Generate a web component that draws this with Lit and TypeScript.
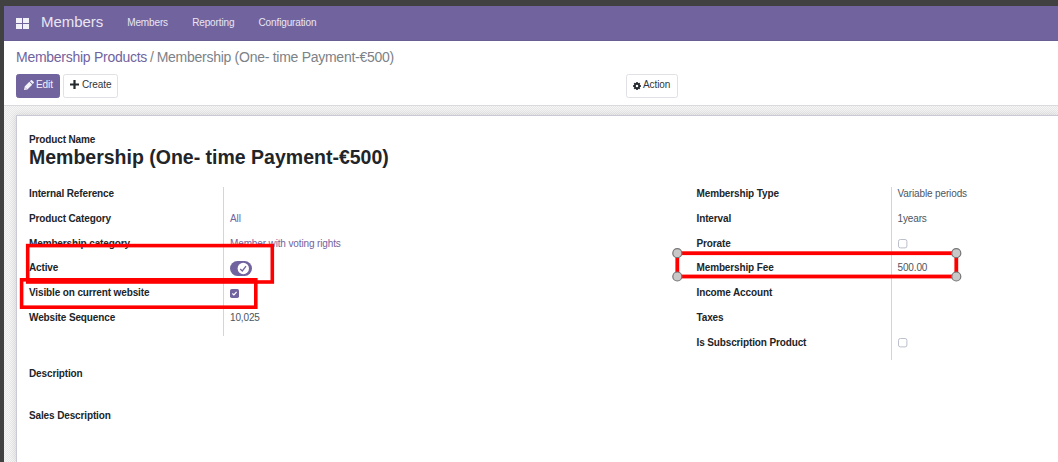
import { LitElement, html, css, svg, nothing } from "lit";
import { customElement, property } from "lit/decorators.js";

type Field = { label: string; kind?: "text" | "link" | "toggle" | "check" | "box"; value?: string };

const LEFT: Field[] = [
  { label: "Internal Reference" },
  { label: "Product Category", kind: "link", value: "All" },
  { label: "Membership category", kind: "link", value: "Member with voting rights" },
  { label: "Active", kind: "toggle" },
  { label: "Visible on current website", kind: "check" },
  { label: "Website Sequence", kind: "text", value: "10,025" },
];

const RIGHT: Field[] = [
  { label: "Membership Type", kind: "text", value: "Variable periods" },
  { label: "Interval", kind: "text", value: "1years" },
  { label: "Prorate", kind: "box" },
  { label: "Membership Fee", kind: "text", value: "500.00" },
  { label: "Income Account" },
  { label: "Taxes" },
  { label: "Is Subscription Product", kind: "box" },
];

@customElement("field-group")
class FieldGroup extends LitElement {
  @property({ attribute: false }) fields: Field[] = [];

  static styles = css`
    :host { display: block; }
    .row { display: grid; grid-template-columns: 194px 1fr; height: 24.75px; line-height: 13px; font-size: 10px; }
    .label { font-weight: bold; color: #212529; white-space: nowrap; letter-spacing: -0.13px; }
    .value { border-left: 1px solid #d3d5da; padding-left: 6px; color: #4c5560; letter-spacing: -0.13px; white-space: nowrap; }
    .link { color: #71639e; }
    .value svg { display: block; }
    .value .switch { margin-top: 0; }
    .value .tick { margin-top: 2.5px; }
    .value .box { margin-top: 2.5px; }
  `;

  private renderValue(f: Field) {
    switch (f.kind) {
      case "link":
        return html`<span class="link">${f.value}</span>`;
      case "text":
        return f.value;
      case "toggle":
        return html`<svg class="switch" width="22" height="15" viewBox="0 0 22 15">
          <rect width="22" height="15" rx="7.5" fill="#71639e" />
          <circle cx="13.3" cy="7.5" r="5.7" fill="#fff" />
          <path d="M10.2 8l2.1 2 3.7-4.8" fill="none" stroke="#71639e" stroke-width="1.3" />
        </svg>`;
      case "check":
        return html`<svg class="tick" width="9" height="9" viewBox="0 0 9 9">
          <rect width="9" height="9" rx="1.8" fill="#71639e" />
          <path d="M2.4 4.5l1.5 1.4 2.7-3" fill="none" stroke="#fff" stroke-width="1.2" />
        </svg>`;
      case "box":
        return html`<svg class="box" width="10" height="10" viewBox="0 0 10 10">
          <rect x="0.5" y="0.5" width="8.4" height="8.4" rx="1.9" fill="#fff" stroke="#b4b8c6" stroke-width="0.9" />
        </svg>`;
      default:
        return nothing;
    }
  }

  render() {
    return this.fields.map(
      (f) => html`<div class="row"><span class="label">${f.label}</span><div class="value">${this.renderValue(f)}</div></div>`
    );
  }
}

@customElement("app-root")
class AppRoot extends LitElement {
  static styles = css`
    :host {
      display: block; position: relative; box-sizing: border-box; width: 1058px; height: 462px; overflow: hidden;
      padding: 6px 0 0 4px; background: #414141; color: #212529;
      font-family: "Liberation Sans", Arial, sans-serif; font-size: 10px;
    }
    .page { display: flex; flex-direction: column; height: 456px; }
    .nav { display: flex; align-items: center; box-sizing: border-box; height: 35px; padding: 0 0 2px 12px; background: #71639e; border-bottom: 1px solid #6a5f94; color: #e9e6f2; white-space: nowrap; }
    .apps { margin: 3px 12px 0 0; }
    .brand { font-size: 15px; width: 86.2px; margin-bottom: 2px; letter-spacing: -0.05px; }
    .menu { display: flex; gap: 24.2px; font-size: 10px; letter-spacing: -0.13px; }
    .panel { box-sizing: border-box; height: 65px; padding: 8px 0 0 12px; background: #fff; border-bottom: 1px solid #d9dadd; }
    .crumbs { height: 25px; line-height: 17px; font-size: 14px; letter-spacing: -0.27px; color: #7c8287; white-space: nowrap; }
    .crumbs a { color: #71639e; }
    .sep { margin: 0 3px; }
    .actions { display: flex; height: 24px; }
    .btn { display: flex; align-items: center; box-sizing: border-box; height: 24px; padding-bottom: 3px; border: 1px solid #dfe1e6; border-radius: 2.5px; background: #fff; font-size: 10px; letter-spacing: -0.1px; color: #30353a; white-space: nowrap; }
    .btn svg { flex: none; }
    .edit { width: 44px; margin-right: 3px; padding-left: 6.5px; background: #71639e; border-color: #71639e; color: #f4f2f9; gap: 2.5px; }
    .create { width: 55px; padding-left: 6px; gap: 3px; }
    .action { width: 52px; margin-left: 508px; padding-left: 6px; gap: 2px; }
    .body { flex: 1; padding: 9px 0 0 12px; background: repeating-conic-gradient(#e8e8e8 0 25%, #f6f6f6 0 50%) 0 0 / 2px 2px; }
    .sheet { box-sizing: border-box; height: 347px; padding: 17px 0 0 12px; background: #fff; border: solid #c9cad6; border-width: 1px 0 0 1px; box-shadow: 0 0 7px rgba(0, 0, 0, 0.13); }
    .caption { font-size: 10px; letter-spacing: -0.13px; line-height: 13px; font-weight: bold; }
    .title { margin: 0; box-sizing: border-box; height: 41px; font-size: 19.5px; line-height: 23px; font-weight: bold; white-space: nowrap; }
    .groups { display: grid; grid-template-columns: 667.5px 1fr; height: 180px; align-items: start; }
    .section { height: 42px; font-size: 10px; letter-spacing: -0.13px; line-height: 13px; font-weight: bold; }
    .marks { position: absolute; left: 0; top: 0; pointer-events: none; }
  `;

  render() {
    const handles = [[677.3, 253.2], [956.3, 253.2], [677.3, 276.5], [956.3, 276.5]];
    return html`
      <div class="page">
        <div class="nav">
          <svg class="apps" width="13" height="11" viewBox="0 0 13 11" fill="#f3f1f8">
            <path d="M0 0h6v5H0zM7 0h6v5H7zM0 6h6v5H0zM7 6h6v5H7z" />
          </svg>
          <span class="brand">Members</span>
          <div class="menu"><span>Members</span><span>Reporting</span><span>Configuration</span></div>
        </div>
        <div class="panel">
          <div class="crumbs"><a>Membership Products</a><span class="sep">/</span><span>Membership (One- time Payment-€500)</span></div>
          <div class="actions">
            <div class="btn edit">
              <svg width="10" height="10" viewBox="0 0 10 10" fill="#f4f2f9">
                <path d="M0 10l.7-3.4L5.3 1.8l2.9 2.9-4.8 4.7zM5.9 1.2L6.9.3q.6-.5 1.1 0l1.7 1.7q.5.5 0 1.1l-1 1z" />
                <path d="M1.2 7.6l1.2 1.2" stroke="#71639e" stroke-width=".5" />
              </svg>
              <span>Edit</span>
            </div>
            <div class="btn create">
              <svg width="9" height="9" viewBox="0 0 9 9" fill="#24292e"><path d="M3.4 0h2.2v3.4H9v2.2H5.6V9H3.4V5.6H0V3.4h3.4z" /></svg>
              <span>Create</span>
            </div>
            <div class="btn action">
              <svg width="8" height="10" viewBox="0 0 8 10">
                <g transform="translate(4 6)" fill="#24292e">
                  ${[0, 45, 90, 135].map((a) => svg`<rect x="-.9" y="-3.9" width="1.8" height="7.8" rx=".3" transform="rotate(${a})" />`)}
                  <circle r="2.9" />
                  <circle r="1.25" fill="#fff" />
                </g>
              </svg>
              <span>Action</span>
            </div>
          </div>
        </div>
        <div class="body">
          <div class="sheet">
            <div class="caption">Product Name</div>
            <h1 class="title">Membership (One- time Payment-€500)</h1>
            <div class="groups">
              <field-group .fields=${LEFT}></field-group>
              <field-group .fields=${RIGHT}></field-group>
            </div>
            <div class="section">Description</div>
            <div class="section">Sales Description</div>
          </div>
        </div>
      </div>
      <svg class="marks" width="1058" height="462" viewBox="0 0 1058 462" fill="none" stroke="#fe0000">
        <rect x="27.7" y="245.6" width="244.6" height="36.4" stroke-width="3.6" />
        <rect x="21.6" y="279.8" width="234.2" height="27.4" stroke-width="3.6" />
        <rect x="677.3" y="253.2" width="279" height="23.3" stroke-width="3.8" />
        ${handles.map(([x, y]) => svg`<circle cx=${x} cy=${y} r="4.5" fill="#c8c8c8" stroke="#757575" stroke-width="1.2" />`)}
      </svg>
    `;
  }
}
